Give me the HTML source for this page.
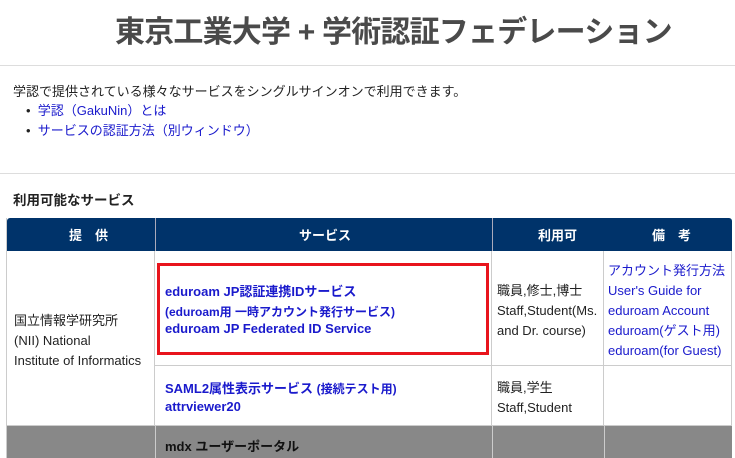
<!DOCTYPE html>
<html><head><meta charset="utf-8"><style>
*{margin:0;padding:0;box-sizing:border-box}
body{width:735px;height:458px;overflow:hidden;background:#fff;font-family:"Liberation Sans","Noto Sans CJK JP",sans-serif;font-size:13px;color:#222;position:relative}
.a{position:absolute;white-space:nowrap}
.l{color:#1a1acc}
.b{font-weight:bold}
.hr{position:absolute;left:0;width:735px;height:1px;background:#ddd}
.c{position:absolute;border-right:1px solid #ccc;border-bottom:1px solid #ccc}
</style></head><body>
<div class="a" style="left:115px;top:7px;font-size:30px;font-weight:bold;color:#4a4a4a;letter-spacing:-0.8px">東京工業大学 + 学術認証フェデレーション</div>
<div class="hr" style="top:65px"></div>
<div class="a" style="left:13px;top:81px">学認で提供されている様々なサービスをシングルサインオンで利用できます。</div>
<div class="a" style="left:26px;top:100px">•&nbsp;&nbsp;<span class="l">学認（GakuNin）とは</span></div>
<div class="a" style="left:26px;top:120px">•&nbsp;&nbsp;<span class="l">サービスの認証方法（別ウィンドウ）</span></div>
<div class="hr" style="top:173px"></div>
<div class="a b" style="left:13px;top:189px;font-size:13.5px">利用可能なサービス</div>
<div style="position:absolute;left:6px;top:218px;width:725px;height:240px;border-left:1px solid #ccc">
<div style="position:absolute;left:0;top:0;width:725px;height:33px;background:#00336a;border-radius:3px 3px 0 0"></div>
<div style="position:absolute;left:148px;top:0;width:1px;height:33px;background:#aab"></div>
<div style="position:absolute;left:485px;top:0;width:1px;height:33px;background:#aab"></div>
<div class="a b" style="left:62px;top:7px;color:#fff">提　供</div>
<div class="a b" style="left:292px;top:7px;color:#fff">サービス</div>
<div class="a b" style="left:531px;top:7px;color:#fff">利用可</div>
<div class="a b" style="left:645px;top:7px;color:#fff">備　考</div>
<div class="c" style="left:0;top:33px;width:148px;height:175px"></div>
<div class="c" style="left:148px;top:33px;width:337px;height:115px"></div>
<div class="c" style="left:485px;top:33px;width:112px;height:115px"></div>
<div class="c" style="left:597px;top:33px;width:128px;height:115px"></div>
<div class="c" style="left:148px;top:148px;width:337px;height:60px"></div>
<div class="c" style="left:485px;top:148px;width:112px;height:60px"></div>
<div class="c" style="left:597px;top:148px;width:128px;height:60px"></div>
<div style="position:absolute;left:0;top:208px;width:725px;height:32px;background:#888"></div>
<div style="position:absolute;left:148px;top:208px;width:1px;height:32px;background:#ccc"></div>
<div style="position:absolute;left:485px;top:208px;width:1px;height:32px;background:#ccc"></div>
<div style="position:absolute;left:597px;top:208px;width:1px;height:32px;background:#ccc"></div>
</div>
<div class="a" style="left:14px;top:311px;line-height:20px">国立情報学研究所<br>(NII) National<br>Institute of Informatics</div>
<div style="position:absolute;left:157px;top:263px;width:332px;height:92px;border:3px solid #e8141c"></div>
<div class="a b l" style="left:165px;top:281px">eduroam JP認証連携IDサービス</div>
<div class="a l" style="left:165px;top:303px;font-size:12px;font-weight:bold">(eduroam用 一時アカウント発行サービス)</div>
<div class="a b l" style="left:165px;top:321px">eduroam JP Federated ID Service</div>
<div class="a" style="left:497px;top:281px;line-height:20px">職員,修士,博士<br>Staff,Student(Ms.<br>and Dr. course)</div>
<div class="a l" style="left:608px;top:261px;line-height:20px">アカウント発行方法<br>User's Guide for<br>eduroam Account<br>eduroam(ゲスト用)<br>eduroam(for Guest)</div>
<div class="a b l" style="left:165px;top:378px">SAML2属性表示サービス <span style="font-size:12px">(接続テスト用)</span></div>
<div class="a b l" style="left:165px;top:399px">attrviewer20</div>
<div class="a" style="left:497px;top:378px;line-height:20px">職員,学生<br>Staff,Student</div>
<div class="a b" style="left:165px;top:436px;color:#111">mdx ユーザーポータル</div>
</body></html>
